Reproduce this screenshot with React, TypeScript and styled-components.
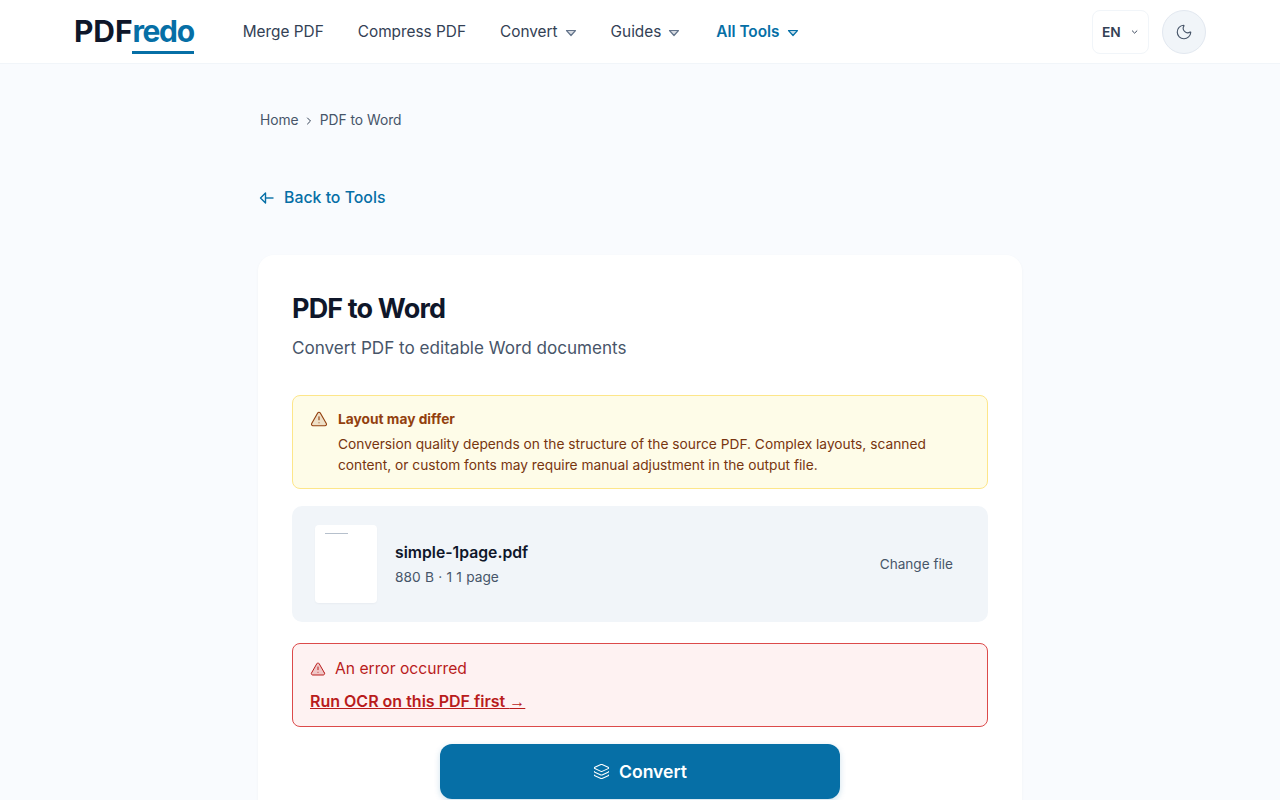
import React from 'react';
import styled, { createGlobalStyle } from 'styled-components';
import { ChevronDown, ChevronRight, Layers, Moon, TriangleAlert } from 'lucide-react';

const Primary = '#066fa6';
const Ink = '#0f172a';
const Slate = '#334155';
const Muted = '#475569';

const GlobalStyle = createGlobalStyle`
    html, body {
        margin: 0;
        padding: 0;
        background: #f9fbfe;
        font-family: Inter, "Liberation Sans", sans-serif;
        height: 800px;
        overflow: hidden;
    }
    * { box-sizing: border-box; }
`;

const Header = styled.header`
    height: 64px;
    background: #fff;
    border-bottom: 1px solid #f1f5f9;
    display: flex;
    align-items: center;
    padding: 0 74px;
`;

const Logo = styled.a`
    font-size: 30px;
    line-height: 36px;
    font-weight: 700;
    letter-spacing: -0.1px;
    color: ${Ink};
    margin-right: 49px;
    margin-top: -2px;
`;

const LogoAccent = styled.span`
    display: inline-block;
    color: ${Primary};
    border-bottom: 3px solid ${Primary};
    letter-spacing: -1.35px;
    line-height: 36px;
    height: 41px;
    margin-bottom: -5px;
`;

const Nav = styled.nav`
    display: flex;
    align-items: center;
    gap: 34px;
    flex: 1;
`;

const NavItem = styled.a<{ $active?: boolean }>`
    display: flex;
    align-items: center;
    gap: 7px;
    font-size: 15.36px;
    line-height: 24px;
    font-weight: ${props => props.$active ? 600 : 400};
    color: ${props => props.$active ? Primary : Slate};
    margin-left: ${props => props.$active ? '2px' : 0};
`;

const Caret = styled.svg`
    width: 12px;
    height: 12px;
    margin-top: 2px;
`;

const LangButton = styled.button`
    width: 57px;
    height: 44px;
    border: 1px solid #f1f5f9;
    border-radius: 8px;
    background: #fff;
    display: flex;
    align-items: center;
    padding: 0 9px;
    gap: 9px;
    font: 600 13.76px Inter, sans-serif;
    color: ${Slate};
    margin-right: 13px;
`;

const ThemeButton = styled.button`
    width: 44px;
    height: 44px;
    border-radius: 50%;
    border: 1px solid #e2e8f0;
    background: #f1f5f9;
    display: flex;
    align-items: center;
    justify-content: center;
    color: ${Muted};
    padding: 0;
`;

const Main = styled.main`
    width: 764px;
    margin: 0 auto;
`;

const Breadcrumb = styled.div`
    display: flex;
    align-items: center;
    gap: 4.5px;
    padding: 46px 0 0 2px;
    font-size: 13.8px;
    line-height: 21px;
    color: ${Muted};
`;

const BackLink = styled.a`
    display: flex;
    align-items: center;
    gap: 10px;
    margin-top: 55px;
    font-size: 15.85px;
    line-height: 24px;
    font-weight: 500;
    color: ${Primary};
`;

const BackArrow = styled.svg`
    width: 15px;
    height: 14px;
    margin-left: 1px;
`;

const Card = styled.section`
    margin-top: 45px;
    background: #fff;
    border-radius: 16px;
    padding: 34px;
    box-shadow: 0 1px 3px rgba(15, 23, 42, 0.04);
    height: 700px;
`;

const Title = styled.h1`
    margin: 1px 0 0;
    font-size: 27px;
    line-height: 38px;
    font-weight: 700;
    letter-spacing: -0.85px;
    color: ${Ink};
`;

const Subtitle = styled.p`
    margin: 6px 0 0;
    font-size: 17.1px;
    line-height: 27px;
    color: ${Muted};
`;

const Notice = styled.div`
    margin-top: 34px;
    height: 94px;
    background: #fefce8;
    border: 1px solid #fde68a;
    border-radius: 8px;
    padding: 12px 17px;
    display: flex;
    gap: 10px;
    color: #78350f;
`;

const NoticeBody = styled.div`
    font-size: 13.76px;
    line-height: 21px;
`;

const NoticeTitle = styled.div`
    font-weight: 700;
    line-height: 22px;
    margin-bottom: 4px;
    color: #92400e;
`;

const FileRow = styled.div`
    margin-top: 17px;
    height: 116px;
    background: #f1f5f9;
    border-radius: 10px;
    padding: 19px 35px 19px 23px;
    display: flex;
    align-items: center;
`;

const Thumb = styled.div`
    width: 62px;
    height: 78px;
    background: #fff;
    border-radius: 4px;
    padding: 8px 10px;
    margin-right: 18px;
    box-shadow: 0 1px 2px rgba(15, 23, 42, 0.04);
`;

const ThumbLine = styled.div`
    width: 23px;
    height: 1px;
    background: #b6c0cc;
`;

const FileInfo = styled.div`
    flex: 1;
    margin-top: 1px;
`;

const FileName = styled.div`
    font-size: 15.76px;
    line-height: 24px;
    font-weight: 600;
    color: ${Ink};
`;

const FileMeta = styled.div`
    font-size: 13.76px;
    line-height: 24px;
    word-spacing: 0.4px;
    color: ${Muted};
`;

const ChangeFile = styled.a`
    font-size: 13.6px;
    line-height: 21px;
    color: ${Muted};
`;

const ErrorBox = styled.div`
    margin-top: 21px;
    height: 84px;
    background: #fef2f2;
    border: 1px solid #dc4a4a;
    border-radius: 8px;
    padding: 13px 17px;
    color: #b91c1c;
`;

const ErrorLine = styled.div`
    display: flex;
    align-items: center;
    gap: 9px;
    font-size: 15.65px;
    line-height: 24px;
`;

const ErrorLink = styled.a`
    display: inline-block;
    margin-top: 8px;
    font-size: 16px;
    line-height: 24px;
    font-weight: 600;
    text-decoration: underline;
`;

const LinkArrow = styled.span`
    font-family: "Liberation Sans", sans-serif;
    font-weight: 400;
`;

const ConvertWrap = styled.div`
    margin-top: 17px;
    display: flex;
    justify-content: center;
`;

const ConvertButton = styled.button`
    width: 400px;
    height: 55px;
    border: 0;
    border-radius: 12px;
    background: ${Primary};
    color: #fff;
    display: flex;
    align-items: center;
    justify-content: center;
    gap: 9px;
    font: 600 17.6px Inter, sans-serif;
    box-shadow: 0 2px 6px rgba(3, 105, 161, 0.2);
`;

const DownCaret: React.FC<{ color: string }> = ({ color }) => (
    <Caret viewBox="0 0 12 12" fill="none" stroke={color} strokeWidth="1.2" strokeLinejoin="round">
        <path d="M1.5 3.5h9L6 8.5z" fill={color} fillOpacity="0.25" />
    </Caret>
);

export default function App() {
    return (
        <>
            <GlobalStyle />
            <Header>
                <Logo>PDF<LogoAccent>redo</LogoAccent></Logo>
                <Nav>
                    <NavItem>Merge PDF</NavItem>
                    <NavItem>Compress PDF</NavItem>
                    <NavItem>Convert <DownCaret color="#64748b" /></NavItem>
                    <NavItem>Guides <DownCaret color="#64748b" /></NavItem>
                    <NavItem $active>All Tools <DownCaret color={Primary} /></NavItem>
                </Nav>
                <LangButton>EN <ChevronDown size={14} strokeWidth={2.5} /></LangButton>
                <ThemeButton><Moon size={18} strokeWidth={1.5} /></ThemeButton>
            </Header>
            <Main>
                <Breadcrumb>
                    <span>Home</span>
                    <ChevronRight size={12} color={Slate} />
                    <span>PDF to Word</span>
                </Breadcrumb>
                <BackLink>
                    <BackArrow viewBox="0 0 15 14" fill="none" stroke={Primary} strokeWidth="1.4" strokeLinejoin="round">
                        <path d="M6.5 2 1.5 7l5 5z" />
                        <path d="M6.5 7h8" />
                    </BackArrow>
                    Back to Tools
                </BackLink>
                <Card>
                    <Title>PDF to Word</Title>
                    <Subtitle>Convert PDF to editable Word documents</Subtitle>
                    <Notice>
                        <TriangleAlert size={18} strokeWidth={1.5} color="#92400e" fill="#92400e" fillOpacity={0.15} style={{ marginTop: 2, flexShrink: 0 }} />
                        <NoticeBody>
                            <NoticeTitle>Layout may differ</NoticeTitle>
                            Conversion quality depends on the structure of the source PDF. Complex layouts, scanned content, or custom fonts may require manual adjustment in the output file.
                        </NoticeBody>
                    </Notice>
                    <FileRow>
                        <Thumb><ThumbLine /></Thumb>
                        <FileInfo>
                            <FileName>simple-1page.pdf</FileName>
                            <FileMeta>880 B · 1 1 page</FileMeta>
                        </FileInfo>
                        <ChangeFile>Change file</ChangeFile>
                    </FileRow>
                    <ErrorBox>
                        <ErrorLine>
                            <TriangleAlert size={16} strokeWidth={1.5} fill="#b91c1c" fillOpacity={0.2} />
                            An error occurred
                        </ErrorLine>
                        <ErrorLink>Run OCR on this PDF first <LinkArrow>→</LinkArrow></ErrorLink>
                    </ErrorBox>
                    <ConvertWrap>
                        <ConvertButton><Layers size={17} strokeWidth={1.5} /> Convert</ConvertButton>
                    </ConvertWrap>
                </Card>
            </Main>
        </>
    );
}
